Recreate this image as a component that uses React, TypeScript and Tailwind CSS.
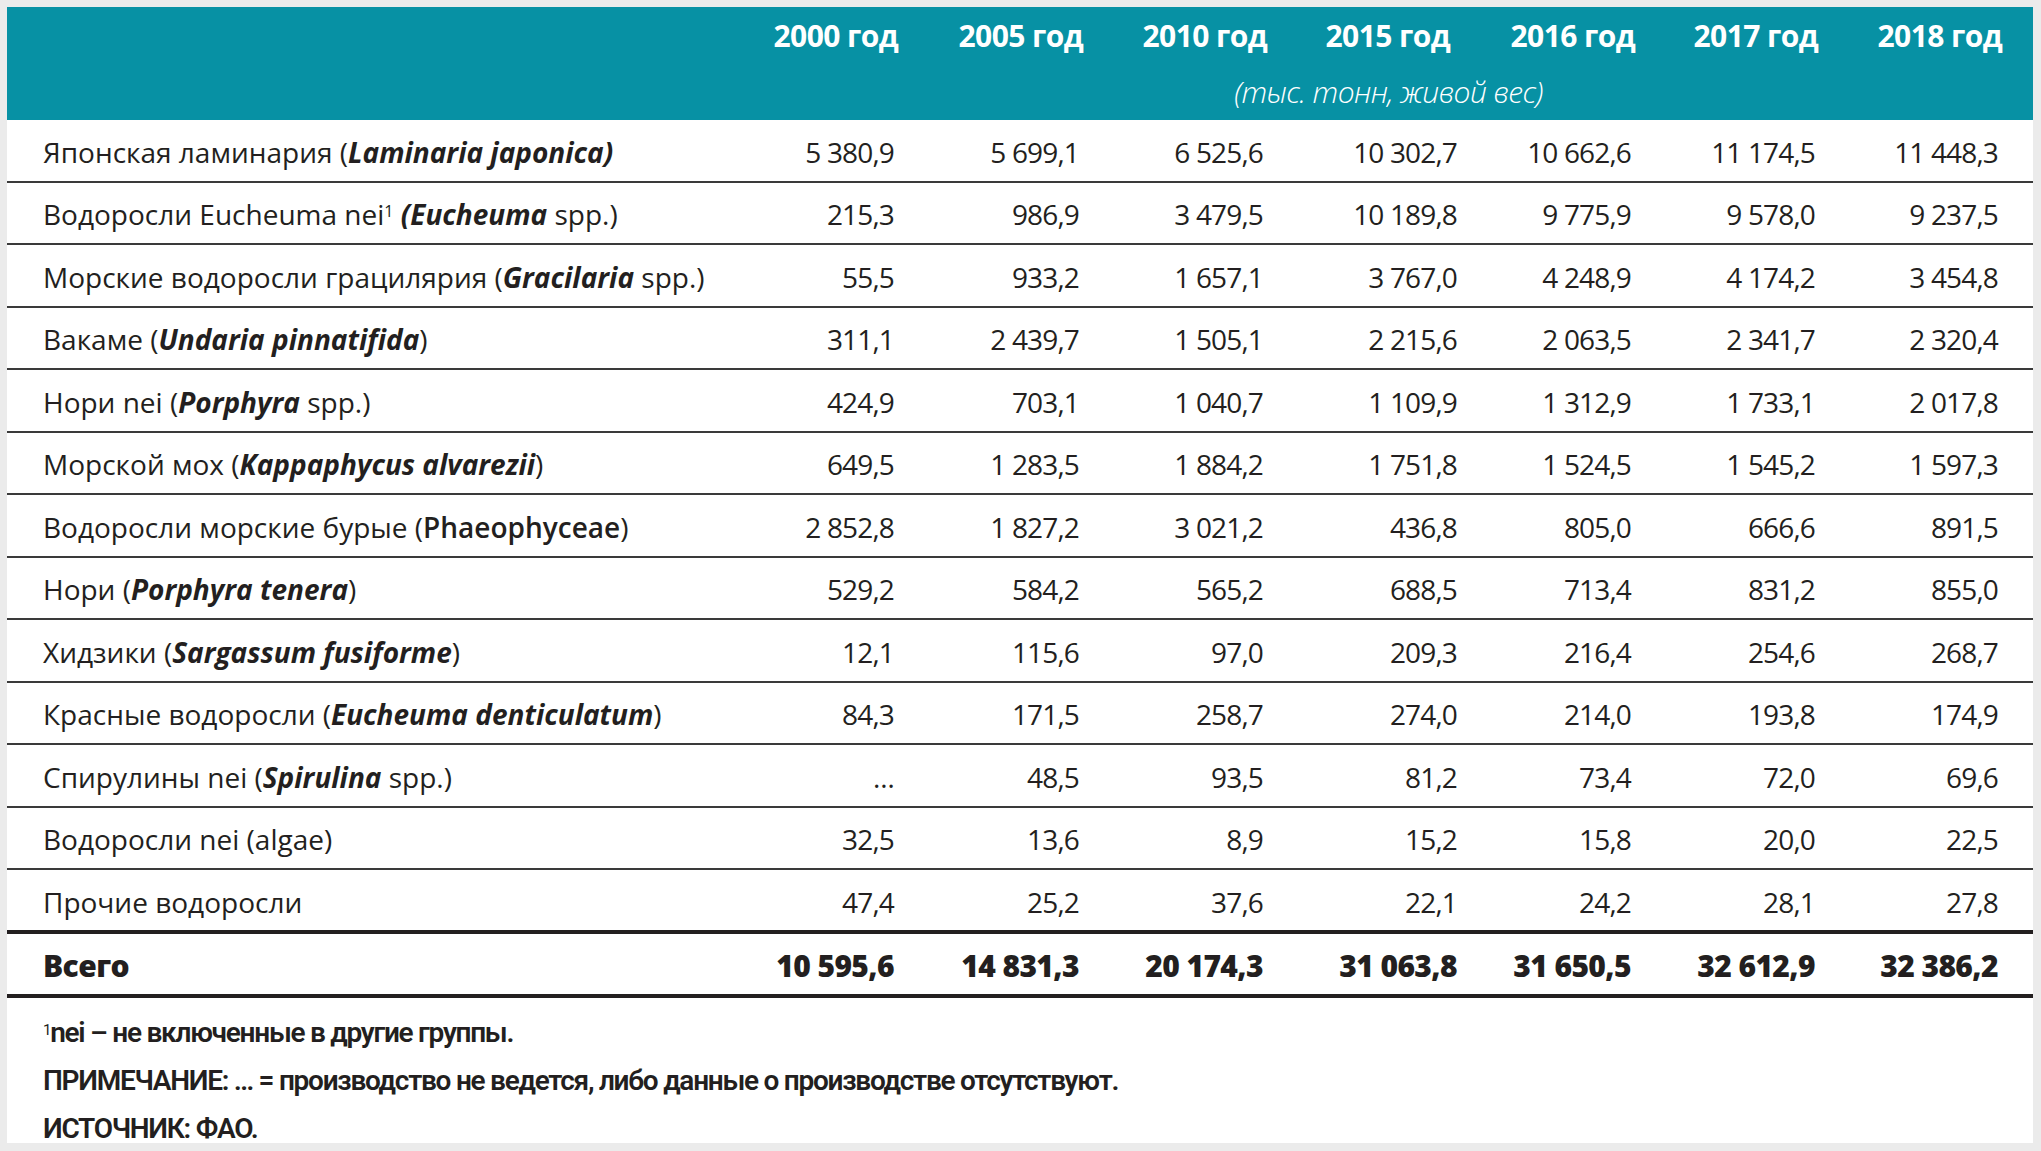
import type { ReactNode } from "react";

type Row = { label: ReactNode; values: string[] };

const YEARS = ["2000 год", "2005 год", "2010 год", "2015 год", "2016 год", "2017 год", "2018 год"];

const BI = ({ children }: { children: ReactNode }) => <b className="font-bold italic">{children}</b>;

const ROWS: Row[] = [
  {
    label: (
      <>
        Японская ламинария (<BI>Laminaria japonica)</BI>
      </>
    ),
    values: ["5 380,9", "5 699,1", "6 525,6", "10 302,7", "10 662,6", "11 174,5", "11 448,3"],
  },
  {
    label: (
      <>
        Водоросли Eucheuma nei<sup className="text-[16px]">1</sup> <BI>(Eucheuma</BI> spp.)
      </>
    ),
    values: ["215,3", "986,9", "3 479,5", "10 189,8", "9 775,9", "9 578,0", "9 237,5"],
  },
  {
    label: (
      <>
        Морские водоросли грацилярия (<BI>Gracilaria</BI> spp.)
      </>
    ),
    values: ["55,5", "933,2", "1 657,1", "3 767,0", "4 248,9", "4 174,2", "3 454,8"],
  },
  {
    label: (
      <>
        Вакаме (<BI>Undaria pinnatifida</BI>)
      </>
    ),
    values: ["311,1", "2 439,7", "1 505,1", "2 215,6", "2 063,5", "2 341,7", "2 320,4"],
  },
  {
    label: (
      <>
        Нори nei (<BI>Porphyra</BI> spp.)
      </>
    ),
    values: ["424,9", "703,1", "1 040,7", "1 109,9", "1 312,9", "1 733,1", "2 017,8"],
  },
  {
    label: (
      <>
        Морской мох (<BI>Kappaphycus alvarezii</BI>)
      </>
    ),
    values: ["649,5", "1 283,5", "1 884,2", "1 751,8", "1 524,5", "1 545,2", "1 597,3"],
  },
  {
    label: (
      <>
        Водоросли морские бурые (<b className="font-semibold">Phaeophyceae</b>)
      </>
    ),
    values: ["2 852,8", "1 827,2", "3 021,2", "436,8", "805,0", "666,6", "891,5"],
  },
  {
    label: (
      <>
        Нори (<BI>Porphyra tenera</BI>)
      </>
    ),
    values: ["529,2", "584,2", "565,2", "688,5", "713,4", "831,2", "855,0"],
  },
  {
    label: (
      <>
        Хидзики (<BI>Sargassum fusiforme</BI>)
      </>
    ),
    values: ["12,1", "115,6", "97,0", "209,3", "216,4", "254,6", "268,7"],
  },
  {
    label: (
      <>
        Красные водоросли (<BI>Eucheuma denticulatum</BI>)
      </>
    ),
    values: ["84,3", "171,5", "258,7", "274,0", "214,0", "193,8", "174,9"],
  },
  {
    label: (
      <>
        Спирулины nei (<BI>Spirulina</BI> spp.)
      </>
    ),
    values: ["…", "48,5", "93,5", "81,2", "73,4", "72,0", "69,6"],
  },
  { label: "Водоросли nei (algae)", values: ["32,5", "13,6", "8,9", "15,2", "15,8", "20,0", "22,5"] },
  { label: "Прочие водоросли", values: ["47,4", "25,2", "37,6", "22,1", "24,2", "28,1", "27,8"] },
];

const TOTAL = ["10 595,6", "14 831,3", "20 174,3", "31 063,8", "31 650,5", "32 612,9", "32 386,2"];

// label col, 7 year cols, right gutter
const GRID = "grid grid-cols-[712px_175px_185px_184px_194px_174px_184px_183px_35px]";

// small nudges so the bold year headings sit like the printed ones
const HEAD_NUDGE = ["-mr-[4px]", "-mr-[4px]", "-mr-[4px]", "mr-[7px]", "-mr-[4px]", "-mr-[3px]", "-mr-[4px]"];

export default function App() {
  return (
    <div className="min-h-screen bg-[#ebebeb] pt-[7px] pl-[7px] pr-[8px] pb-[8px] font-['Open_Sans',sans-serif] text-[#231f20]">
      <div className="w-[2026px] bg-white">
        {/* header */}
        <div className="flex h-[113px] flex-col bg-[#0791a4] text-white">
          <div className={`${GRID} h-[56px] items-center`}>
            <div />
            {YEARS.map((y, i) => (
              <div key={y} className={`text-right text-[30px] font-bold tracking-[-0.02em] ${HEAD_NUDGE[i]}`}>
                {y}
              </div>
            ))}
          </div>
          <div className={`${GRID} h-[57px] items-center`}>
            <div />
            <div className="col-span-7 pl-[60px] text-center text-[30px] font-light italic tracking-[-0.02em]">
              (тыс. тонн, живой вес)
            </div>
          </div>
        </div>

        {/* body */}
        {ROWS.map((r, i) => {
          const last = i === ROWS.length - 1;
          return (
            <div
              key={i}
              className={`${GRID} items-center pt-[3px] text-[28px] ${
                last ? "h-[64px] border-b-4 border-[#231f20]" : "h-[62.5px] border-b-2 border-[#3a3a3a]"
              }`}
            >
              <div className="pl-[36px] whitespace-nowrap">{r.label}</div>
              {r.values.map((v, j) => (
                <div key={j} className="text-right whitespace-nowrap tracking-[-0.03em]">
                  {v}
                </div>
              ))}
            </div>
          );
        })}

        <div className={`${GRID} h-[64px] items-center pt-[3px] border-b-4 border-[#231f20] text-[30px] font-extrabold tracking-[-0.02em]`}>
          <div className="pl-[36px]">Всего</div>
          {TOTAL.map((v, j) => (
            <div key={j} className="text-right whitespace-nowrap">
              {v}
            </div>
          ))}
        </div>

        {/* notes */}
        <div className="flex h-[145px] flex-col gap-[20px] pt-[21px] pl-[36px] font-['Liberation_Sans_Narrow','Roboto',sans-serif] text-[28px] leading-[28px] font-semibold tracking-[-0.045em] text-[#231f20]">
          <p>
            <sup className="text-[15px] font-normal">1</sup>nei – не включенные в другие группы.
          </p>
          <p>ПРИМЕЧАНИЕ: … = производство не ведется, либо данные о производстве отсутствуют.</p>
          <p>ИСТОЧНИК: ФАО.</p>
        </div>
      </div>
    </div>
  );
}
